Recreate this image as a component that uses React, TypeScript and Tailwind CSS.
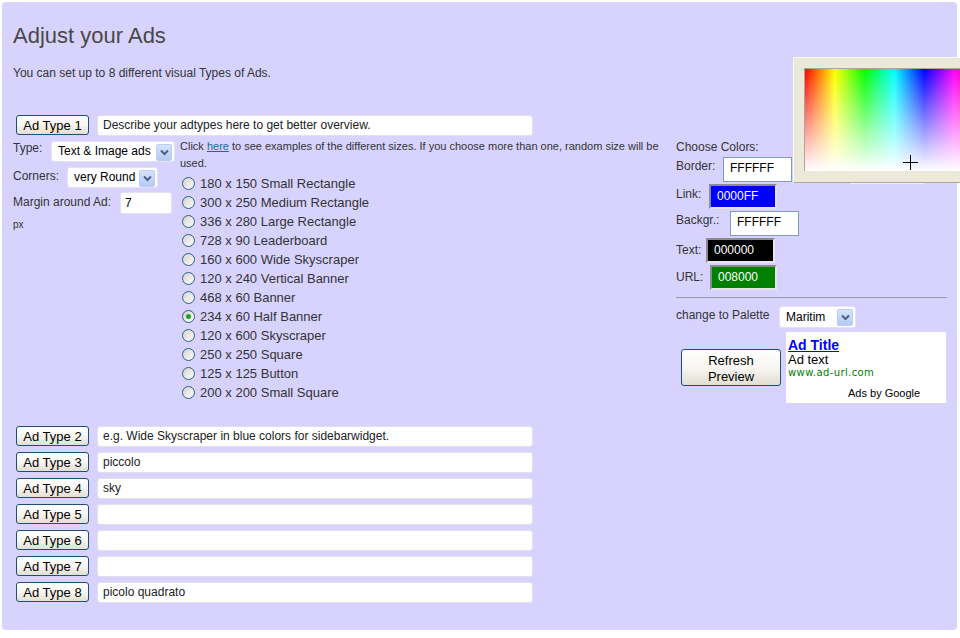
import React from "react";

const sizes = [
  "180 x 150 Small Rectangle",
  "300 x 250 Medium Rectangle",
  "336 x 280 Large Rectangle",
  "728 x 90 Leaderboard",
  "160 x 600 Wide Skyscraper",
  "120 x 240 Vertical Banner",
  "468 x 60 Banner",
  "234 x 60 Half Banner",
  "120 x 600 Skyscraper",
  "250 x 250 Square",
  "125 x 125 Button",
  "200 x 200 Small Square",
];

const adTypes = [
  { n: 2, text: "e.g. Wide Skyscraper in blue colors for sidebarwidget." },
  { n: 3, text: "piccolo" },
  { n: 4, text: "sky" },
  { n: 5, text: "" },
  { n: 6, text: "" },
  { n: 7, text: "" },
  { n: 8, text: "picolo quadrato" },
];

function XPButton({ children, className = "" }: { children: React.ReactNode; className?: string }) {
  return (
    <div
      className={
        "flex items-center justify-center rounded-[3px] border border-[#1c4f7e] bg-linear-to-b from-white via-[#f7f6f1] to-[#e2dfd2] text-black " +
        className
      }
    >
      {children}
    </div>
  );
}

function AdRow({ n, text }: { n: number; text: string }) {
  return (
    <div className="flex items-start">
      <XPButton className="ml-[3px] w-[73px] h-[20px] text-[13px] leading-none">
        {"Ad Type " + n}
      </XPButton>
      <div className="ml-[8px] w-[436px] h-[21px] rounded-[3px] border border-[#e2e0ea] bg-white pl-[5px] text-[12px] leading-[19px] text-[#222]">
        {text}
      </div>
    </div>
  );
}

function Arrow() {
  return (
    <div className="absolute right-[2px] top-[2px] w-[16px] h-[17px] rounded-[2px] border border-[#b9cdf5] bg-linear-to-b from-[#d6e3fc] to-[#b5caf4] flex items-center justify-center">
      <svg width="9" height="7" viewBox="0 0 9 7">
        <path d="M1 1.5 L4.5 5 L8 1.5" fill="none" stroke="#4d6185" strokeWidth="2" />
      </svg>
    </div>
  );
}

function Select({ value, className }: { value: string; className: string }) {
  return (
    <div
      className={
        "relative rounded-[3px] border border-[#e4e2ee] bg-white pl-[6px] text-[12px] text-black " + className
      }
    >
      {value}
      <Arrow />
    </div>
  );
}

function Radio({ checked }: { checked?: boolean }) {
  return (
    <span className="mt-[3px] flex items-center justify-center w-[13px] h-[13px] rounded-full border border-[#2f5f8f] bg-linear-to-br from-[#d4d2cc] to-white">
      {checked && <span className="w-[5px] h-[5px] rounded-full bg-[#1fa21f]" />}
    </span>
  );
}

const colorRows = [
  { label: "Border:", val: "FFFFFF", lw: "w-[47px]", pt: "pt-[2px]", box: "border border-[#7f9db9] bg-white text-black", iw: "w-[69px]" },
  { label: "Link:", val: "0000FF", lw: "w-[33px]", pt: "pt-[3px]", box: "border-2 border-t-[#8c8c8c] border-l-[#8c8c8c] border-b-[#e6e6e6] border-r-[#e6e6e6] bg-[#0000ff] text-white", iw: "w-[68px]" },
  { label: "Backgr.:", val: "FFFFFF", lw: "w-[54px]", pt: "pt-[2px]", box: "border border-[#7f9db9] bg-white text-black", iw: "w-[69px]" },
  { label: "Text:", val: "000000", lw: "w-[30px]", pt: "pt-[5px]", box: "border-2 border-t-[#8c8c8c] border-l-[#8c8c8c] border-b-[#e6e6e6] border-r-[#e6e6e6] bg-black text-white", iw: "w-[69px]" },
  { label: "URL:", val: "008000", lw: "w-[34px]", pt: "pt-[5px]", box: "border-2 border-t-[#8c8c8c] border-l-[#8c8c8c] border-b-[#e6e6e6] border-r-[#e6e6e6] bg-[#008000] text-white", iw: "w-[67px]" },
];

export default function App() {
  return (
    <div
      className="relative w-[960px] h-[638px] overflow-hidden bg-white"
      style={{ fontFamily: '"Liberation Sans", Arial, sans-serif' }}
    >
      <div className="ml-[2px] mt-[2px] w-[955px] h-[628px] rounded-[4px] bg-[#d7d3fe] pl-[11px] pt-[21px] text-[#333]">
        <h1 className="text-[22px] leading-[26px] text-[#484848]">Adjust your Ads</h1>
        <p className="mt-[17px] text-[12px] leading-[14px]">
          You can set up to 8 different visual Types of Ads.
        </p>

        <div className="mt-[35px]">
          <AdRow n={1} text="Describe your adtypes here to get better overview." />
        </div>

        <div className="mt-[2px] flex items-start">
          {/* left column */}
          <div className="w-[167px] pt-[3px] text-[12px]">
            <div className="flex items-start h-[21px]">
              <span className="w-[38px] leading-[14px]">Type:</span>
              <Select value="Text & Image ads" className="w-[124px] h-[21px] leading-[19px]" />
            </div>
            <div className="mt-[5px] flex items-start h-[21px]">
              <span className="w-[54px] pt-[2px] leading-[14px]">Corners:</span>
              <Select value="very Round" className="w-[91px] h-[21px] leading-[19px]" />
            </div>
            <div className="mt-[4px] flex items-start h-[21px]">
              <span className="w-[107px] pt-[3px] leading-[14px]">Margin around Ad:</span>
              <div className="w-[52px] h-[22px] rounded-[3px] border border-[#e4e2ee] bg-white pl-[4px] text-[12px] leading-[20px] text-black">
                7
              </div>
            </div>
            <div className="mt-[6px] text-[10px] leading-[12px]">px</div>
          </div>

          {/* middle column */}
          <div className="w-[496px]">
            <div className="text-[11px] leading-[17px] whitespace-nowrap">
              Click <span className="text-[#1d6a96] underline">here</span> to see examples of the different sizes. If you choose more than one, random size will be
              <br />
              used.
            </div>
            <div className="mt-[2px]">
              {sizes.map((s, i) => (
                <div key={s} className="flex items-start h-[19px] pl-[2px]">
                  <Radio checked={i === 7} />
                  <span className="ml-[5px] text-[13px] leading-[19px] text-[#333]">{s}</span>
                </div>
              ))}
            </div>
          </div>

          {/* right column */}
          <div className="w-[271px] text-[12px]">
            <div className="pt-[2px] leading-[14px]">Choose Colors:</div>
            <div className="mt-[3px] flex flex-col gap-[2px]">
              {colorRows.map((r) => (
                <div key={r.label} className="flex items-start h-[25px]">
                  <span className={r.lw + " " + r.pt + " leading-[14px]"}>{r.label}</span>
                  <div className={r.iw + " h-[25px] pl-[6px] text-[12px] leading-[21px] " + r.box}>{r.val}</div>
                </div>
              ))}
            </div>
            <div className="mt-[7px] border-t border-[#9a98a8]" />
            <div className="mt-[8px] flex items-start">
              <span className="w-[103px] pt-[2px] leading-[14px]">change to Palette</span>
              <Select value="Maritim" className="w-[77px] h-[22px] leading-[20px]" />
            </div>
            <div className="mt-[4px] flex items-start">
              <XPButton className="ml-[5px] mt-[17px] w-[100px] h-[37px] flex-col pt-[2px] text-[13px] leading-[16px]">
                <span>Refresh</span>
                <span>Preview</span>
              </XPButton>
              <div className="ml-[5px] w-[160px] h-[71px] bg-white pl-[2px] pt-[6px]">
                <div className="text-[14px] leading-[15px] font-bold text-[#0000ff] underline">Ad Title</div>
                <div className="text-[13px] leading-[14px] text-black">Ad text</div>
                <div
                  className="text-[10px] leading-[12px] tracking-[0.4px] text-[#008000]"
                  style={{ fontFamily: '"DejaVu Sans", Verdana, sans-serif' }}
                >
                  www.ad-url.com
                </div>
                <div className="mt-[8px] pl-[60px] text-[11px] leading-[13px] text-black">Ads by Google</div>
              </div>
            </div>
          </div>
        </div>

        <div className="mt-[23px] flex flex-col gap-[5px]">
          {adTypes.map((a) => (
            <AdRow key={a.n} n={a.n} text={a.text} />
          ))}
        </div>
      </div>

      {/* color picker popup */}
      <div className="absolute left-[793px] top-[57px] w-[170px] h-[126px] border-t border-l border-[#f8f7f2] border-b border-b-[#aca899] bg-[#ece9d8]">
        <div className="absolute left-[10px] top-[10px] w-[180px] h-[103px] border-t border-l border-[#aca899] bg-[linear-gradient(to_right,#ff0000,#ffff00,#00ff00,#00ffff,#0000ff,#ff00ff,#ff0000)]">
          <div className="w-full h-full bg-[linear-gradient(to_bottom,rgba(255,255,255,0),rgba(255,255,255,0.45)_45%,#ffffff)]" />
        </div>
        <div className="absolute left-[109px] top-[104px] w-[15px] h-[1px] bg-black" />
        <div className="absolute left-[116px] top-[97px] w-[1px] h-[15px] bg-black" />
      </div>
      <div className="absolute left-[850px] top-[183px] w-[75px] h-[1px] bg-[#eeecf6]" />
    </div>
  );
}
